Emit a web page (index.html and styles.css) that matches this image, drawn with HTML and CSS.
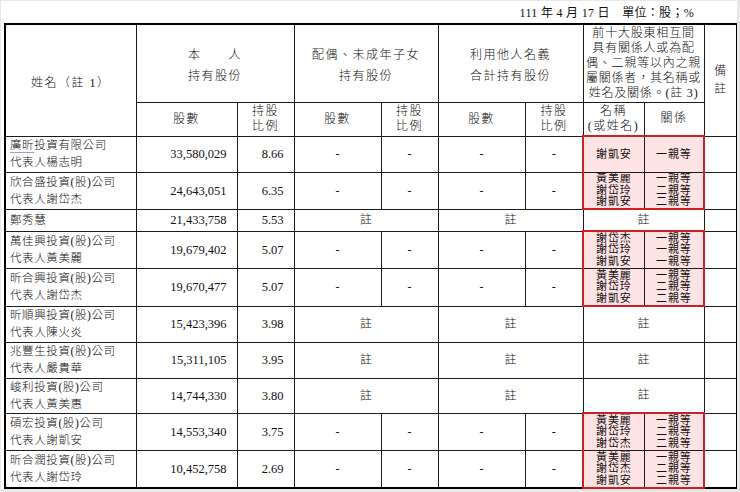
FILE: index.html
```html
<!DOCTYPE html>
<html lang="zh-Hant">
<head>
<meta charset="utf-8">
<title>前十大股東</title>
<link rel="stylesheet" href="styles.css">
</head>
<body>
<div class="page">
  <div class="caption">111 年 4 月 17 日　單位：股；%</div>
  <table class="sheet">
    <colgroup>
      <col class="c-name"><col class="c-sh"><col class="c-pct">
      <col class="c-sh2"><col class="c-pct">
      <col class="c-sh2"><col class="c-pct2">
      <col class="c-rn"><col class="c-rr"><col class="c-rm">
    </colgroup>
    <thead>
      <tr class="h1">
        <th rowspan="2" class="hd"><span class="ln">姓名（註 1）</span></th>
        <th colspan="2" class="hd"><span class="ln">本　　人</span><span class="ln">持有股份</span></th>
        <th colspan="2" class="hd"><span class="ln">配偶、未成年子女</span><span class="ln">持有股份</span></th>
        <th colspan="2" class="hd"><span class="ln">利用他人名義</span><span class="ln">合計持有股份</span></th>
        <th colspan="2" class="rel-hd"><span class="ln">前十大股東相互間</span><span class="ln">具有關係人或為配</span><span class="ln">偶、二親等以內之親</span><span class="ln">屬關係者，其名稱或</span><span class="ln">姓名及關係。(註 3)</span></th>
        <th rowspan="2" class="remark"><span class="ln">備</span><span class="ln">註</span></th>
      </tr>
      <tr class="h2">
        <th class="sub"><span class="ln">股數</span></th><th class="sub"><span class="ln">持股</span><span class="ln">比例</span></th>
        <th class="sub"><span class="ln">股數</span></th><th class="sub"><span class="ln">持股</span><span class="ln">比例</span></th>
        <th class="sub"><span class="ln">股數</span></th><th class="sub"><span class="ln">持股</span><span class="ln">比例</span></th>
        <th class="sub"><span class="ln">名稱</span><span class="ln">(或姓名)</span></th><th class="sub"><span class="ln">關係</span></th>
      </tr>
    </thead>
    <tbody>
      <tr class="r36">
        <td class="name"><span class="ln"><span class="spell">廣昕</span>投資有限公司</span><span class="ln">代表人楊志明</span></td>
        <td class="num">33,580,029</td><td class="num">8.66</td>
        <td>-</td><td>-</td><td>-</td><td>-</td>
        <td class="rel rl rt"><span class="ln">謝凱安</span></td><td class="rel rr rt"><span class="ln">一親等</span></td>
        <td></td>
      </tr>
      <tr class="r37">
        <td class="name"><span class="ln">欣合盛投資(股)公司</span><span class="ln">代表人謝岱杰</span></td>
        <td class="num">24,643,051</td><td class="num">6.35</td>
        <td>-</td><td>-</td><td>-</td><td>-</td>
        <td class="rel rl rb"><span class="ln">黃美麗</span><span class="ln">謝岱玲</span><span class="ln">謝凱安</span></td><td class="rel rr rb"><span class="ln">一親等</span><span class="ln">二親等</span><span class="ln">二親等</span></td>
        <td></td>
      </tr>
      <tr class="r22">
        <td class="name"><span class="ln">鄭秀慧</span></td>
        <td class="num">21,433,758</td><td class="num">5.53</td>
        <td colspan="2" class="note">註</td><td colspan="2" class="note">註</td><td colspan="2" class="note">註</td>
        <td></td>
      </tr>
      <tr class="r37">
        <td class="name"><span class="ln">萬佳興投資(股)公司</span><span class="ln">代表人黃美麗</span></td>
        <td class="num">19,679,402</td><td class="num">5.07</td>
        <td>-</td><td>-</td><td>-</td><td>-</td>
        <td class="rel rl rt"><span class="ln">謝岱杰</span><span class="ln">謝岱玲</span><span class="ln">謝凱安</span></td><td class="rel rr rt"><span class="ln">一親等</span><span class="ln">一親等</span><span class="ln">一親等</span></td>
        <td></td>
      </tr>
      <tr class="r38">
        <td class="name"><span class="ln">昕合興投資(股)公司</span><span class="ln">代表人謝岱杰</span></td>
        <td class="num">19,670,477</td><td class="num">5.07</td>
        <td>-</td><td>-</td><td>-</td><td>-</td>
        <td class="rel rl rb"><span class="ln">黃美麗</span><span class="ln">謝岱玲</span><span class="ln">謝凱安</span></td><td class="rel rr rb"><span class="ln">一親等</span><span class="ln">二親等</span><span class="ln">二親等</span></td>
        <td></td>
      </tr>
      <tr class="r36">
        <td class="name"><span class="ln">昕順興投資(股)公司</span><span class="ln">代表人陳火炎</span></td>
        <td class="num">15,423,396</td><td class="num">3.98</td>
        <td colspan="2" class="note">註</td><td colspan="2" class="note">註</td><td colspan="2" class="note">註</td>
        <td></td>
      </tr>
      <tr class="r36">
        <td class="name"><span class="ln">兆豐生投資(股)公司</span><span class="ln">代表人嚴貴華</span></td>
        <td class="num">15,311,105</td><td class="num">3.95</td>
        <td colspan="2" class="note">註</td><td colspan="2" class="note">註</td><td colspan="2" class="note">註</td>
        <td></td>
      </tr>
      <tr class="r35">
        <td class="name"><span class="ln">峻利投資(股)公司</span><span class="ln">代表人黃美惠</span></td>
        <td class="num">14,744,330</td><td class="num">3.80</td>
        <td colspan="2" class="note">註</td><td colspan="2" class="note">註</td><td colspan="2" class="note">註</td>
        <td></td>
      </tr>
      <tr class="r37">
        <td class="name"><span class="ln">碩宏投資(股)公司</span><span class="ln">代表人謝凱安</span></td>
        <td class="num">14,553,340</td><td class="num">3.75</td>
        <td>-</td><td>-</td><td>-</td><td>-</td>
        <td class="rel rl rt"><span class="ln">黃美麗</span><span class="ln">謝岱玲</span><span class="ln">謝岱杰</span></td><td class="rel rr rt"><span class="ln">一親等</span><span class="ln">二親等</span><span class="ln">二親等</span></td>
        <td></td>
      </tr>
      <tr class="r38">
        <td class="name"><span class="ln">昕合潤投資(股)公司</span><span class="ln">代表人謝岱玲</span></td>
        <td class="num">10,452,758</td><td class="num">2.69</td>
        <td>-</td><td>-</td><td>-</td><td>-</td>
        <td class="rel rl rb"><span class="ln">黃美麗</span><span class="ln">謝岱杰</span><span class="ln">謝凱安</span></td><td class="rel rr rb"><span class="ln">一親等</span><span class="ln">二親等</span><span class="ln">二親等</span></td>
        <td></td>
      </tr>
    </tbody>
  </table>
</div>
</body>
</html>
```
FILE: styles.css
```css
html {
  background: #e9e9e9;
}
body {
  margin: 0;
  font-family: "Liberation Serif", "Noto Sans CJK TC", serif;
  color: #111;
}
.page {
  background: #fff;
  margin: 1px 3px 0 1px;
  width: 736px;
  height: 488px;
  box-sizing: border-box;
  padding: 0 1px 0 3px;
  overflow: hidden;
}
.caption {
  height: 22px;
  line-height: 25px;
  font-size: 12px;
  letter-spacing: 0.3px;
  text-align: right;
  padding-right: 42px;
}
.sheet {
  border-collapse: collapse;
  table-layout: fixed;
  width: 732px;
  border: 2px solid #000;
}
.c-name { width: 131px; }
.c-sh { width: 101px; }
.c-pct { width: 57px; }
.c-sh2 { width: 87px; }
.c-pct2 { width: 58px; }
.c-rn { width: 61px; }
.c-rr { width: 60px; }
.c-rm { width: 33px; }

.sheet th,
.sheet td {
  border: 1px solid #1c1c1c;
  padding: 0;
  font-weight: 300;
  font-size: 12px;
  line-height: 14px;
  text-align: center;
  vertical-align: middle;
  white-space: nowrap;
  overflow: hidden;
}
.ln {
  display: block;
  overflow: visible;
}
.h1 { height: 78px; }
.h2 { height: 34px; }
.hd {
  letter-spacing: 1.5px;
}
.hd .ln {
  height: 21px;
  line-height: 21px;
}
.h1 .hd {
  padding-top: 6px;
}
.remark {
  font-size: 13px;
  padding-top: 2px;
}
.remark .ln {
  height: 18px;
  line-height: 18px;
}
.rel-hd {
  text-align: left;
  letter-spacing: 0.8px;
  padding-left: 3px;
}
.rel-hd .ln {
  height: 15px;
  line-height: 15px;
}
.sub {
  letter-spacing: 1.5px;
}
.sub .ln {
  height: 15px;
  line-height: 15px;
}
.r36 { height: 36px; }
.r37 { height: 37px; }
.r38 { height: 38px; }
.r35 { height: 35px; }
.r22 { height: 22px; }

.sheet td.name {
  text-align: left;
  padding-left: 4px;
  font-size: 11.5px;
  letter-spacing: 0.6px;
}
.name .ln {
  height: 17px;
  line-height: 17px;
}
.spell {
  text-decoration: underline;
  text-decoration-color: #9aa4c8;
  text-underline-offset: 3px;
}
.sheet td.num {
  text-align: right;
  padding-right: 10px;
  font-size: 12.5px;
  font-weight: 400;
}
.note {
  font-size: 11px;
}
.sheet td.rel {
  background: #fde3e3;
  font-size: 11px;
  font-weight: 400;
  letter-spacing: 0.8px;
}
.rel .ln {
  height: 11.5px;
  line-height: 11.5px;
}
.sheet td.rl { border-left: 2px solid #d21f26; }
.sheet td.rr { border-right: 2px solid #d21f26; }
.sheet td.rt { border-top: 2px solid #d21f26; }
.sheet td.rb { border-bottom: 2px solid #d21f26; }
```
